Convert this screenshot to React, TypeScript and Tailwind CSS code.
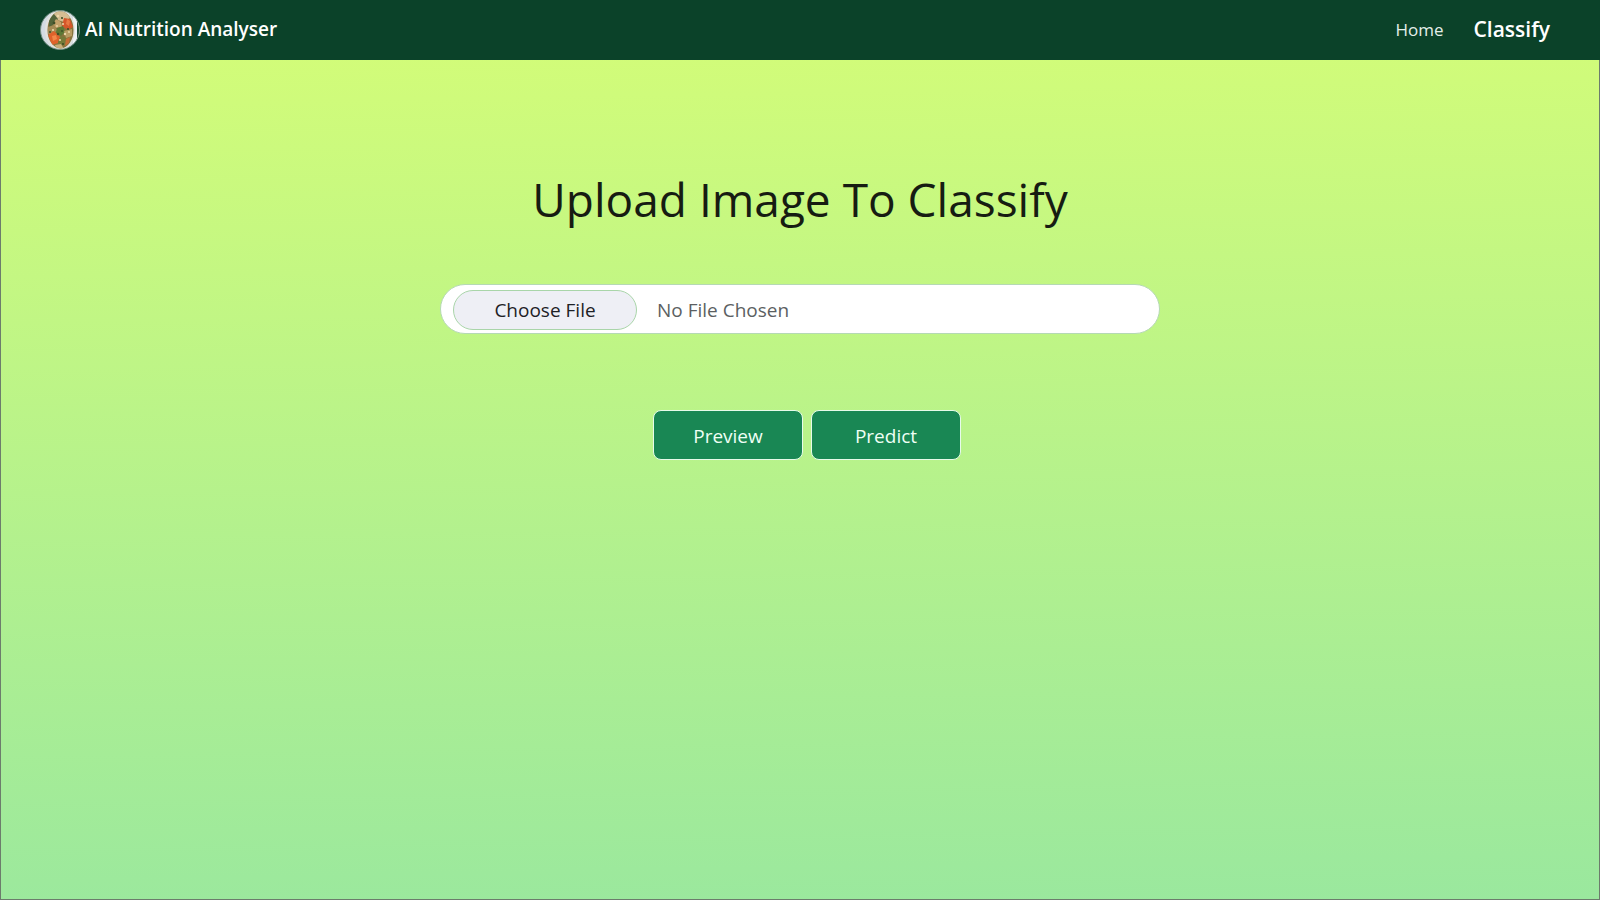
import { useState } from 'react';

function FoodLogo() {
  return (
    <svg viewBox="0 0 40 40" className="size-10 shrink-0" aria-hidden="true">
      <defs>
        <clipPath id="logo-clip">
          <circle cx="20" cy="20" r="19.5" />
        </clipPath>
        <clipPath id="dish-clip">
          <ellipse cx="20.5" cy="20" rx="13" ry="18.5" />
        </clipPath>
      </defs>
      <g clipPath="url(#logo-clip)">
        <rect width="40" height="40" fill="#d3dbe2" />
        <rect x="37" width="3" height="40" fill="#164a31" />
        <path d="M33 6h4v22l-4 7z" fill="#eef2f5" />
        <ellipse cx="20" cy="20" rx="15" ry="20" fill="#e2e2de" />
        <g clipPath="url(#dish-clip)">
          <rect width="40" height="40" fill="#86733c" />
          <path d="M14 1h14l2 7-6 4-10-3z" fill="#d6bd92" />
          <path d="M9 8l5-4 4 5-3 5-6 3z" fill="#52643a" />
          <path d="M24 8l6 1 3 8-5 3-6-4z" fill="#d4562a" />
          <path d="M27 9l3 2-1 5-3-2z" fill="#e97842" />
          <path d="M16 9l5 3 1 5-6 1-3-4z" fill="#c4a26b" />
          <path d="M8 17l6-2 3 5-4 5-5-1z" fill="#a58b55" />
          <path d="M17 18l6-2 2 6-4 4-5-3z" fill="#5c7835" />
          <path d="M24 21l8-2v7l-6 2z" fill="#b79c62" />
          <path d="M8 25l6-4 6 6-2 6-6 2z" fill="#df622b" />
          <path d="M12 26l4-1 1 4-4 2z" fill="#f28849" />
          <path d="M21 26l5 2-1 6-6 3-1-5z" fill="#747a38" />
          <path d="M26 29l4-2-1 6-4 3z" fill="#c86c35" />
          <path d="M15 35l6-1 3 5h-8z" fill="#c9ae7b" />
          <g fill="#ecd9ab">
            <circle cx="18" cy="6" r="1.3" />
            <circle cx="23" cy="14" r="1" />
            <circle cx="13" cy="20" r="1.1" />
            <circle cx="17" cy="16" r="0.9" />
            <circle cx="25" cy="24" r="1.2" />
            <circle cx="20" cy="30" r="1" />
            <circle cx="29" cy="22" r="0.9" />
          </g>
          <g fill="#3f4f27">
            <circle cx="22" cy="8" r="1.1" />
            <circle cx="14" cy="13" r="1.4" />
            <circle cx="28" cy="19" r="1.1" />
            <circle cx="18" cy="24" r="1.2" />
            <circle cx="22" cy="21" r="0.9" />
            <circle cx="10" cy="22" r="1" />
            <circle cx="23" cy="34" r="1.1" />
          </g>
        </g>
      </g>
      <circle cx="20" cy="20" r="19.5" fill="none" stroke="#6f8c7e" />
    </svg>
  );
}

export default function App() {
  const [fileName, setFileName] = useState('');

  return (
    <div className="flex min-h-screen flex-col bg-[#0b4229] font-['Open_Sans','Noto_Sans',sans-serif]">
      <header className="flex h-15 items-center justify-between bg-[#0b4229] pr-[50px] pl-10 text-white">
        <a href="#home" className="flex items-center gap-[5px] text-[19px] leading-6 font-semibold">
          <FoodLogo />
          <span className="pb-0.5">AI Nutrition Analyser</span>
        </a>
        <nav className="flex items-center gap-[30px]">
          <a href="#home" className="text-[17px] text-[#e4efe9]">Home</a>
          <a href="#classify" className="text-[21px] font-semibold">Classify</a>
        </nav>
      </header>

      <main className="flex flex-1 flex-col items-center border-x border-b border-[#6c7c6c] bg-linear-[179deg,#d2fc79,#9ae89e] px-4 pt-27">
        <h1 className="text-center text-[46px] leading-[62px] text-[#161c12]">Upload Image To Classify</h1>

        <label className="mt-[54px] flex h-[50px] w-full max-w-[720px] cursor-pointer items-center gap-5 rounded-full border border-[#b5d9b4] bg-white px-3 pt-0.5 text-[19px]">
          <input
            type="file"
            accept="image/*"
            className="sr-only"
            onChange={(e) => setFileName(e.target.files?.[0]?.name ?? '')}
          />
          <span className="flex h-10 w-46 items-center justify-center rounded-full border border-[#a9d5a9] bg-[#eeeff5] text-[#1d2125]">
            Choose File
          </span>
          <span className="text-[#5c5f62]">{fileName || 'No File Chosen'}</span>
        </label>

        <div className="mt-19 flex gap-2 pl-3.5">
          <button type="button" className="h-[50px] w-[150px] rounded-lg border border-[#e6fbea] bg-[#198754] pt-0.5 text-[19px] text-[#effff5]">
            Preview
          </button>
          <button type="button" className="h-[50px] w-[150px] rounded-lg border border-[#e6fbea] bg-[#198754] pt-0.5 text-[19px] text-[#effff5]">
            Predict
          </button>
        </div>
      </main>
    </div>
  );
}
